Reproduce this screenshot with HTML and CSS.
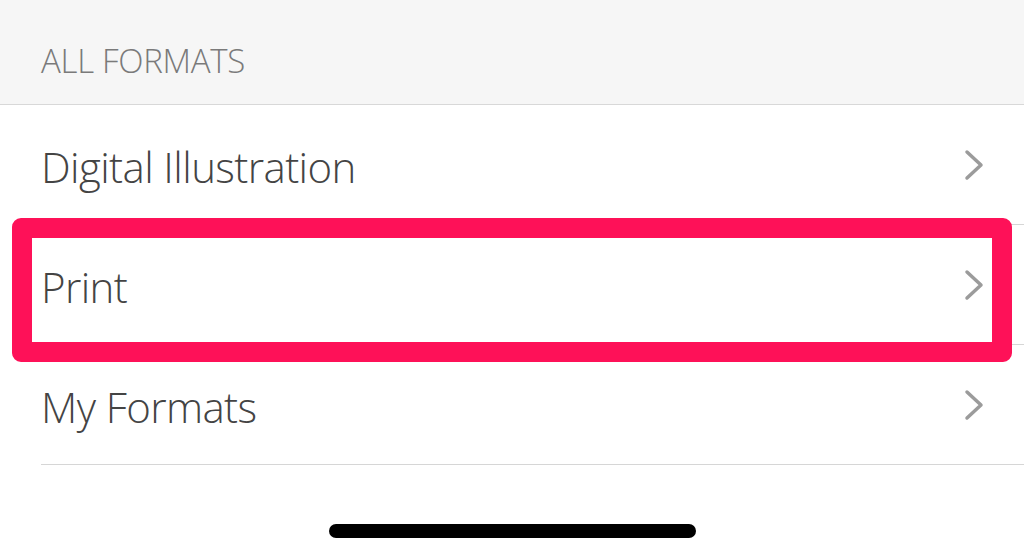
FILE: index.html
```html
<!DOCTYPE html>
<html lang="en">
<head>
    <meta charset="UTF-8">
    <title>Formats</title>
    <link rel="stylesheet" href="styles.css">
</head>
<body>
    <div class="screen">
        <div class="section-header">ALL FORMATS</div>

        <ul class="format-list">
            <li class="format-row">
                <span class="format-name">Digital Illustration</span>
                <svg class="chevron" viewBox="0 0 20 32"><path d="M3 3 L17 16 L3 29"/></svg>
            </li>
            <li class="format-row highlighted">
                <span class="format-name">Print</span>
                <svg class="chevron" viewBox="0 0 20 32"><path d="M3 3 L17 16 L3 29"/></svg>
                <!-- annotation box drawn over the row -->
                <div class="highlight-box"></div>
            </li>
            <li class="format-row">
                <span class="format-name">My Formats</span>
                <svg class="chevron" viewBox="0 0 20 32"><path d="M3 3 L17 16 L3 29"/></svg>
            </li>
        </ul>

        <div class="home-bar"></div>
    </div>
</body>
</html>
```
FILE: styles.css
```css
body {
    margin: 0;
    background-color: #fff;
    font-family: 'Open Sans', 'Liberation Sans', sans-serif;
}

.screen {
    width: 1024px;
    height: 559px;
    display: flex;
    flex-direction: column;
    overflow: hidden;
}

.section-header {
    height: 105px;
    box-sizing: border-box;
    padding: 38px 0 0 41px;
    background-color: #f6f6f6;
    border-bottom: 1px solid #d8d8d8;
    color: #7a7a7a;
    font-size: 33px;
    font-weight: 300;
    letter-spacing: -0.3px;
}

.format-list {
    list-style: none;
    margin: 0;
    padding: 0 0 0 41px;
}

.format-row {
    position: relative;
    height: 120px;
    box-sizing: border-box;
    display: flex;
    align-items: center;
    justify-content: space-between;
    padding: 3px 40px 0 0;
    border-bottom: 1px solid #d6d6d6;
}

.format-name {
    color: #444;
    font-size: 42px;
    font-weight: 300;
    letter-spacing: -0.6px;
}

.chevron {
    width: 20px;
    height: 32px;
    margin-top: -3px;
}

.chevron path {
    fill: none;
    stroke: #9b9b9b;
    stroke-width: 3.5;
    stroke-linecap: round;
    stroke-linejoin: round;
}

.highlight-box {
    position: absolute;
    left: -29px;
    right: 12px;
    top: -7px;
    bottom: -18px;
    border: 20px solid #fe1158;
    border-radius: 9px;
}

.home-bar {
    width: 367px;
    height: 14px;
    margin: 59px auto 0;
    background-color: #000;
    border-radius: 7px;
}
```
